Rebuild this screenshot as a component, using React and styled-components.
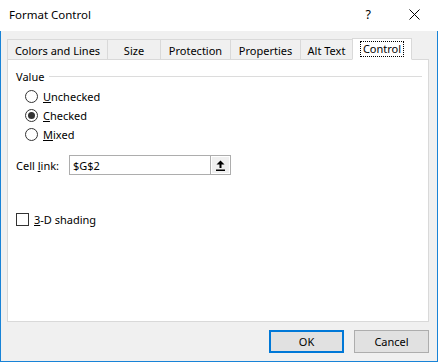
import React from 'react'
import styled, { createGlobalStyle } from 'styled-components'

const GlobalStyle = createGlobalStyle`
  body {
    margin: 0;
    font-family: "Noto Sans", "Open Sans", sans-serif;
    font-size: 11px;
    color: #000;
  }
  * { box-sizing: border-box; }
`

const tabs = [
  { label: 'Colors and Lines', width: 101 },
  { label: 'Size', width: 54 },
  { label: 'Protection', width: 71 },
  { label: 'Properties', width: 71 },
  { label: 'Alt Text', width: 53 },
  { label: 'Control', width: 60, active: true },
]

const FormatControl = () => {
  return (
    <Window>
      <TitleBar>
        <Title>Format Control</Title>
        <TitleButtons>
          <HelpGlyph>?</HelpGlyph>
          <svg width="11" height="11" viewBox="0 0 11 11">
            <path d="M0.5 0.5 L10.5 10.5 M10.5 0.5 L0.5 10.5" stroke="#000" strokeWidth="1" />
          </svg>
        </TitleButtons>
      </TitleBar>
      <Body>
        <TabRow>
          {tabs.map(t => (
            <Tab key={t.label} active={t.active} style={{ width: t.width }}>
              {t.active ? <Focus>{t.label}</Focus> : t.label}
            </Tab>
          ))}
        </TabRow>
        <Panel>
          <GroupHead>
            <span>Value</span>
            <GroupLine />
          </GroupHead>
          <RadioList>
            <RadioRow>
              <Radio />
              <span><u>U</u>nchecked</span>
            </RadioRow>
            <RadioRow>
              <Radio checked />
              <span><u>C</u>hecked</span>
            </RadioRow>
            <RadioRow>
              <Radio />
              <span><u>M</u>ixed</span>
            </RadioRow>
          </RadioList>
          <LinkRow>
            <span>Cell <u>l</u>ink:</span>
            <RefBox>
              <RefText>$G$2</RefText>
              <RefButton>
                <svg width="9" height="11" viewBox="0 0 9 11">
                  <path d="M4.5 0.5 L8.5 4.5 L5.5 4.5 L5.5 8 L3.5 8 L3.5 4.5 L0.5 4.5 Z" fill="#000" />
                  <rect x="0" y="9.5" width="9" height="1.5" fill="#000" />
                </svg>
              </RefButton>
            </RefBox>
          </LinkRow>
          <CheckRow>
            <Check />
            <span><u>3</u>-D shading</span>
          </CheckRow>
        </Panel>
        <Footer>
          <Button primary>OK</Button>
          <Button>Cancel</Button>
        </Footer>
      </Body>
    </Window>
  )
}

export default function App() {
  return (
    <>
      <GlobalStyle />
      <FormatControl />
    </>
  )
}

const Window = styled.div`
  width: 438px;
  height: 362px;
  display: flex;
  flex-direction: column;
  background: #f0f0f0;
`
const TitleBar = styled.div`
  height: 31px;
  background: #fff;
  display: flex;
  align-items: center;
  justify-content: space-between;
  padding: 0 18px 0 9px;
`
const Title = styled.div`
  font-size: 11.5px;
  margin-top: -2px;
`
const TitleButtons = styled.div`
  display: flex;
  align-items: center;
  gap: 38px;
  margin-top: -3px;
`
const HelpGlyph = styled.span`
  font-size: 12.5px;
`
const Body = styled.div`
  flex: 1;
  display: flex;
  flex-direction: column;
  border: 1px solid #1883d7;
  border-top: none;
  padding: 7px 8px 0 6px;
`
const TabRow = styled.div`
  display: flex;
  align-items: flex-end;
  height: 21px;
  padding-left: 1px;
  position: relative;
  z-index: 1;
`
const Tab = styled.div`
  height: ${p => (p.active ? '22px' : '20px')};
  display: flex;
  align-items: center;
  justify-content: center;
  background: ${p => (p.active ? '#fff' : '#f0f0f0')};
  border: 1px solid #d9d9d9;
  border-bottom: ${p => (p.active ? '1px solid #fff' : 'none')};
  margin-left: -1px;
  margin-bottom: ${p => (p.active ? '-1px' : '0')};
  color: #000;
  padding-top: ${p => (p.active ? '0' : '1px')};
`
const Focus = styled.span`
  outline: 1px dotted #000;
  outline-offset: 0;
  padding: 0 2px;
  line-height: 14px;
`
const Panel = styled.div`
  height: 263px;
  background: #fff;
  border: 1px solid #d9d9d9;
  padding: 8px 6px 0 8px;
  display: flex;
  flex-direction: column;
`
const GroupHead = styled.div`
  display: flex;
  align-items: center;
  gap: 5px;
  height: 16px;
`
const GroupLine = styled.div`
  flex: 1;
  height: 1px;
  background: #dcdcdc;
`
const RadioList = styled.div`
  display: flex;
  flex-direction: column;
  gap: 3px;
  margin-top: 4px;
  padding-left: 9px;
`
const RadioRow = styled.div`
  display: flex;
  align-items: center;
  gap: 5px;
  height: 16px;
`
const Radio = styled.span`
  width: 13px;
  height: 13px;
  border-radius: 50%;
  border: 1px solid #333;
  display: flex;
  align-items: center;
  justify-content: center;
  &::after {
    content: '';
    width: 7px;
    height: 7px;
    border-radius: 50%;
    background: ${p => (p.checked ? '#333' : 'transparent')};
  }
`
const LinkRow = styled.div`
  display: flex;
  align-items: center;
  gap: 10px;
  margin-top: 13px;
  height: 20px;
`
const RefBox = styled.div`
  width: 162px;
  height: 20px;
  border: 1px solid #adadad;
  background: #fff;
  display: flex;
  align-items: stretch;
`
const RefText = styled.div`
  flex: 1;
  display: flex;
  align-items: center;
  padding-left: 3px;
`
const RefButton = styled.div`
  width: 20px;
  background: #f0f0f0;
  border-left: 1px solid #adadad;
  box-shadow: inset 0 0 0 1px #fff;
  display: flex;
  align-items: center;
  justify-content: center;
`
const CheckRow = styled.div`
  display: flex;
  align-items: center;
  gap: 5px;
  margin-top: 37px;
  height: 14px;
`
const Check = styled.span`
  width: 13px;
  height: 13px;
  border: 1px solid #333;
  background: #fff;
`
const Footer = styled.div`
  display: flex;
  justify-content: flex-end;
  gap: 10px;
  padding-top: 8px;
`
const Button = styled.div`
  width: 75px;
  height: 23px;
  display: flex;
  align-items: center;
  justify-content: center;
  background: #e1e1e1;
  border: ${p => (p.primary ? '2px solid #0078d7' : '1px solid #adadad')};
`
